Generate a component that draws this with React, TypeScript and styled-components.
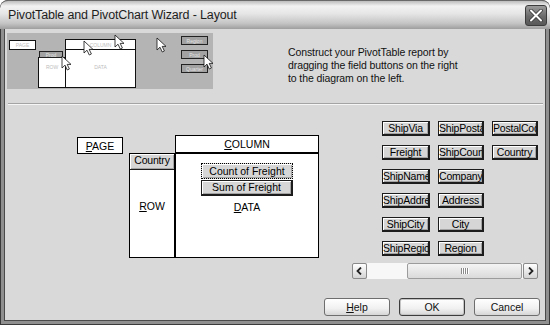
import React from 'react';
import styled, {createGlobalStyle} from 'styled-components';

const GlobalStyle = createGlobalStyle`
  html, body {
    margin: 0;
    padding: 0;
    background: #ffffff;
  }
  body {
    font-family: "Liberation Sans", Arial, sans-serif;
    color: #000;
  }
`;

const Window = styled.div`
  width: 550px;
  height: 325px;
  box-sizing: border-box;
  display: flex;
  flex-direction: column;
  overflow: hidden;
  padding: 0 1px 1px;
  background: #3a3a3a;
  border-radius: 8px 8px 0 0;
`;

const TitleBar = styled.div`
  height: 29px;
  margin: 0 -1px;
  flex-shrink: 0;
  display: flex;
  align-items: center;
  justify-content: space-between;
  padding: 0 3px 0 8px;
  border-radius: 8px 8px 0 0;
  border-top: 1px solid #6a6a6a;
  box-sizing: border-box;
  background: linear-gradient(#bdbdbd 0%, #f2f2f2 18%, #e6e6e6 45%, #c4c4c4 80%, #9e9e9e 100%);
`;

const Title = styled.span`
  font-size: 12.5px;
  letter-spacing: -0.15px;
  color: #1e1e1e;
`;

const CloseButton = styled.div`
  width: 22px;
  height: 21px;
  box-sizing: border-box;
  border: 1px solid #3c3c3c;
  border-radius: 3px;
  background: linear-gradient(#9c9c9c, #6a6a6a 55%, #585858);
  display: flex;
  align-items: center;
  justify-content: center;
`;

const Body = styled.div`
  flex: 1;
  display: flex;
  flex-direction: column;
  background: #d9d9d9;
  border: 3px solid #8f8f8f;
  border-top: none;
  box-shadow: inset 1px 0 #4a4a4a, inset -1px 0 #4a4a4a, inset 0 -1px #4a4a4a;
`;

const TopSection = styled.div`
  display: flex;
  align-items: flex-start;
  padding: 4px 0 0 3px;
`;

const Instructions = styled.div`
  margin: 13px 0 0 75px;
  font-size: 10.5px;
  letter-spacing: -0.1px;
  line-height: 13px;
  color: #111;
`;

const Separator = styled.div`
  margin: 14px 3px 0 4px;
  border-top: 1px solid #a4a4a4;
  border-bottom: 1px solid #f6f6f6;
`;

const Main = styled.div`
  display: flex;
  align-items: flex-start;
`;

const Diagram = styled.div`
  margin: 30px 0 0 73px;
  display: grid;
  grid-template-columns: 46px 6px 46px 144px;
  grid-template-rows: 18px 105px;
  font-size: 10.5px;
`;

const Area = styled.div<{$col: number; $row: number}>`
  grid-column: ${p => p.$col};
  grid-row: ${p => p.$row};
  box-sizing: border-box;
  background: #ffffff;
  border: 1px solid #000;
  display: flex;
  flex-direction: column;
  align-items: center;
`;

const PageArea = styled(Area)`
  margin-top: 2px;
  height: 17px;
  justify-content: center;
`;

const HeaderArea = styled(Area)`
  justify-content: center;
`;

const DataArea = styled(Area)`
  padding-top: 9px;
`;

const AreaLabel = styled.span<{$top: number}>`
  margin-top: ${p => p.$top}px;
  line-height: 12px;
`;

const FieldButton = styled.div<{$width?: number}>`
  width: ${p => (p.$width ? `${p.$width}px` : '100%')};
  height: 15px;
  box-sizing: border-box;
  flex-shrink: 0;
  background: #d6d6d6;
  border: 1px solid #1c1c1c;
  border-right-width: 2px;
  border-bottom-width: 2px;
  box-shadow: inset 1px 1px #ffffff, inset -1px -1px #a3a3a3;
  font-size: 10.5px;
  letter-spacing: -0.2px;
  line-height: 12px;
  text-align: center;
  white-space: nowrap;
  overflow: hidden;
`;

const RowField = styled(FieldButton)`
  height: 16px;
  border-width: 0 0 1px 0;
`;

const FocusField = styled(FieldButton)`
  height: 16px;
  border: 1px dotted #000;
  line-height: 14px;
  letter-spacing: 0;
`;

const DataField = styled(FieldButton)`
  height: 16px;
  margin-top: 1px;
  line-height: 13px;
  letter-spacing: 0;
`;

const FieldPanel = styled.div`
  margin: 16px 0 0 33px;
  display: flex;
  flex-direction: column;
`;

const FieldGrid = styled.div`
  margin-left: 30px;
  display: grid;
  grid-template-columns: 48px 46px 46px;
  grid-template-rows: repeat(6, 15px);
  grid-auto-flow: column;
  column-gap: 8px;
  row-gap: 9px;
`;

const ScrollBar = styled.div`
  margin-top: 7px;
  width: 186px;
  height: 16px;
  display: flex;
`;

const ScrollArrow = styled.div`
  width: 15px;
  height: 16px;
  box-sizing: border-box;
  border: 1px solid #8a8a8a;
  border-radius: 2px;
  background: linear-gradient(#ffffff, #d4d4d4);
  display: flex;
  align-items: center;
  justify-content: center;
`;

const Track = styled.div`
  flex: 1;
  display: flex;
  background: #f7f7f7;
`;

const Thumb = styled.div`
  flex: 1;
  margin: 0 1px 0 40px;
  box-sizing: border-box;
  border: 1px solid #9c9c9c;
  border-radius: 2px;
  background: linear-gradient(#f4f4f4, #dadada);
  display: flex;
  align-items: center;
  justify-content: center;
  gap: 1px;
`;

const Grip = styled.span`
  width: 1px;
  height: 6px;
  background: #8a8a8a;
  box-shadow: 1px 0 #ffffff;
`;

const Footer = styled.div`
  margin-top: 19px;
  display: flex;
  justify-content: flex-end;
  gap: 9px;
  padding-right: 6px;
`;

const DialogButton = styled.button<{$default?: boolean}>`
  width: 66px;
  height: 18px;
  padding: 0;
  box-sizing: border-box;
  border: 1px solid ${p => (p.$default ? '#3c3c3c' : '#6e6e6e')};
  border-radius: 3px;
  background: linear-gradient(#ffffff, #f0f0f0 60%, #d6d6d6);
  box-shadow: ${p => (p.$default ? 'inset 0 0 0 1px #c4c4c4' : 'none')};
  font-family: "Liberation Sans", Arial, sans-serif;
  font-size: 10.5px;
  color: #111;
`;

const Cursor: React.FC<{x: number; y: number}> = ({x, y}) => (
  <path
    transform={`translate(${x} ${y})`}
    d="M0 0 V12 L3 9.2 L5.3 14 L7.4 13 L5.2 8.4 H9 Z"
    fill="#ffffff"
    stroke="#111"
    strokeWidth="0.8"
    strokeLinejoin="round"
  />
);

const Illustration = () => (
  <svg width="206" height="56" viewBox="0 0 206 56">
    <rect width="206" height="56" fill="#b4b4b4"/>
    <g stroke="#111" strokeWidth="1" fill="#ffffff">
      <rect x="2.5" y="7.5" width="26" height="9"/>
      <rect x="58.5" y="6.5" width="70" height="10"/>
      <rect x="58.5" y="16.5" width="70" height="38"/>
      <rect x="31.5" y="24.5" width="27" height="30"/>
    </g>
    <g stroke="#222" strokeWidth="1" fill="#a2a2a2">
      <rect x="32.5" y="18.5" width="23" height="6"/>
      <rect x="174.5" y="3.5" width="26" height="8"/>
      <rect x="174.5" y="17.5" width="26" height="8"/>
      <rect x="174.5" y="31.5" width="26" height="8"/>
    </g>
    <g fontFamily="Liberation Sans, Arial, sans-serif" fontSize="5" fill="#bdbdbd" textAnchor="middle">
      <text x="15.5" y="14">PAGE</text>
      <text x="93.5" y="13.5">COLUMN</text>
      <text x="45" y="36">ROW</text>
      <text x="93.5" y="36">DATA</text>
      <text x="44" y="23.5" fill="#e4e4e4">Prod</text>
      <text x="187.5" y="9.5" fill="#e4e4e4">Region</text>
      <text x="187.5" y="23.5" fill="#e4e4e4">Prod</text>
      <text x="187.5" y="37.5" fill="#e4e4e4">Quarter</text>
    </g>
    <Cursor x={77} y={8}/>
    <Cursor x={108} y={2}/>
    <Cursor x={55} y={23}/>
    <Cursor x={150} y={5}/>
    <Cursor x={197} y={22}/>
  </svg>
);

const Chevron: React.FC<{dir: 'left' | 'right'}> = ({dir}) => (
  <svg width="7" height="8" viewBox="0 0 7 8">
    <path
      d={dir === 'left' ? 'M5 0.5 L1.5 4 L5 7.5' : 'M2 0.5 L5.5 4 L2 7.5'}
      fill="none"
      stroke="#222"
      strokeWidth="1.8"
    />
  </svg>
);

const fieldColumns = [
  ['ShipVia', 'Freight', 'ShipName', 'ShipAddress', 'ShipCity', 'ShipRegion'],
  ['ShipPostalCode', 'ShipCountry', 'CompanyName', 'Address', 'City', 'Region'],
  ['PostalCode', 'Country'],
];

const App: React.FC = () => {
  return (
    <Window>
      <GlobalStyle/>
      <TitleBar>
        <Title>PivotTable and PivotChart Wizard - Layout</Title>
        <CloseButton>
          <svg width="14" height="13" viewBox="0 0 14 13">
            <path d="M2 1.5 L12 11.5 M12 1.5 L2 11.5" stroke="#3a3a3a" strokeWidth="3.6" strokeLinecap="round"/>
            <path d="M2 1.5 L12 11.5 M12 1.5 L2 11.5" stroke="#ffffff" strokeWidth="2" strokeLinecap="round"/>
          </svg>
        </CloseButton>
      </TitleBar>
      <Body>
        <TopSection>
          <Illustration/>
          <Instructions>
            Construct your PivotTable report by<br/>
            dragging the field buttons on the right<br/>
            to the diagram on the left.
          </Instructions>
        </TopSection>
        <Separator/>
        <Main>
          <Diagram>
            <PageArea $col={1} $row={1}><span><u>P</u>AGE</span></PageArea>
            <HeaderArea $col={4} $row={1}><span><u>C</u>OLUMN</span></HeaderArea>
            <Area $col={3} $row={2}>
              <RowField>Country</RowField>
              <AreaLabel $top={30}><u>R</u>OW</AreaLabel>
            </Area>
            <DataArea $col={4} $row={2}>
              <FocusField $width={92}>Count of Freight</FocusField>
              <DataField $width={92}>Sum of Freight</DataField>
              <AreaLabel $top={5}><u>D</u>ATA</AreaLabel>
            </DataArea>
          </Diagram>
          <FieldPanel>
            <FieldGrid>
              {fieldColumns.flat().map(name => (
                <FieldButton key={name}>{name}</FieldButton>
              ))}
            </FieldGrid>
            <ScrollBar>
              <ScrollArrow><Chevron dir="left"/></ScrollArrow>
              <Track>
                <Thumb>
                  <Grip/><Grip/><Grip/><Grip/>
                </Thumb>
              </Track>
              <ScrollArrow><Chevron dir="right"/></ScrollArrow>
            </ScrollBar>
          </FieldPanel>
        </Main>
        <Footer>
          <DialogButton><u>H</u>elp</DialogButton>
          <DialogButton $default>OK</DialogButton>
          <DialogButton>Cancel</DialogButton>
        </Footer>
      </Body>
    </Window>
  );
};

export default App;
